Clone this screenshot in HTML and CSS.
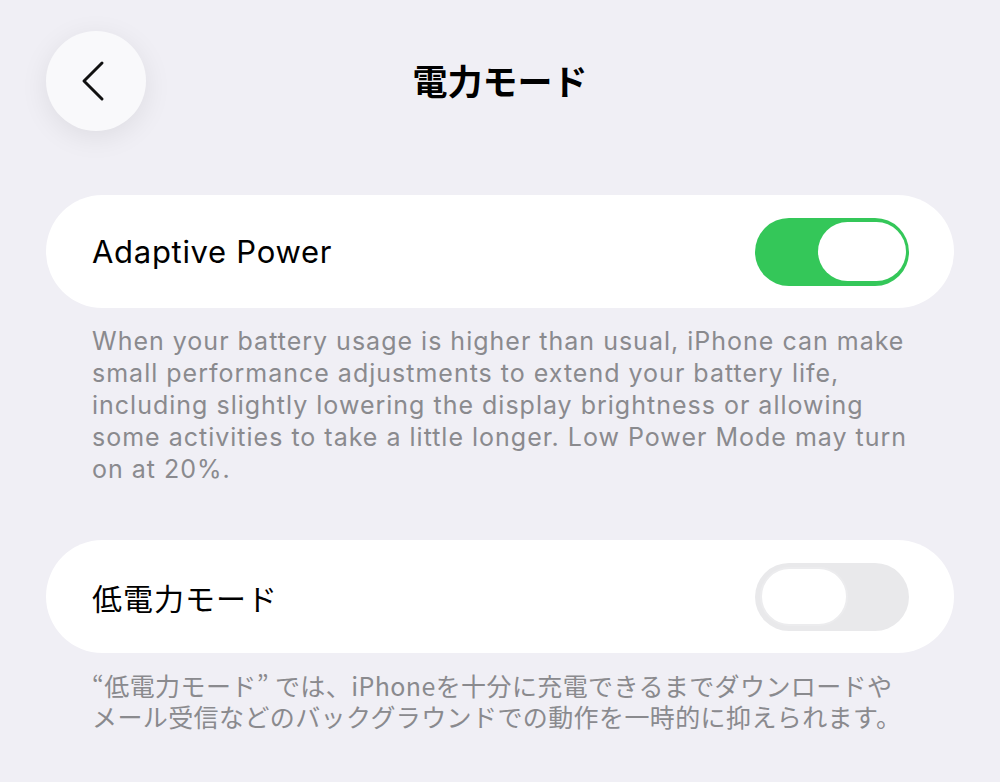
FILE: index.html
```html
<!DOCTYPE html>
<html lang="ja">
<head>
  <meta charset="UTF-8">
  <title>電力モード</title>
  <link rel="stylesheet" href="styles.css">
</head>
<body>
  <div class="screen">
    <header class="nav">
      <button class="back" aria-label="戻る">
        <svg width="26" height="42" viewBox="0 0 26 42">
          <path d="M22 3 L4 21 L22 39" fill="none" stroke="#111" stroke-width="3" stroke-linecap="round" stroke-linejoin="round"/>
        </svg>
      </button>
      <h1 class="title">電力モード</h1>
      <span></span>
    </header>

    <div class="card">
      <span class="label">Adaptive Power</span>
      <div class="switch on"><span class="knob"></span></div>
    </div>
    <p class="note">When your battery usage is higher than usual, iPhone can make<br>
      small performance adjustments to extend your battery life,<br>
      including slightly lowering the display brightness or allowing<br>
      some activities to take a little longer. Low Power Mode may turn<br>
      on at 20%.</p>

    <div class="card second">
      <span class="label jp">低電力モード</span>
      <div class="switch"><span class="knob"></span></div>
    </div>
    <p class="note jp">“低電力モード” では、iPhoneを十分に充電できるまでダウンロードや<br>
      メール受信などのバックグラウンドでの動作を一時的に抑えられます。</p>
  </div>
</body>
</html>
```

FILE: styles.css
```css
body {
  margin: 0;
  background-color: #f0eff5;
  font-family: Inter, "Noto Sans CJK JP", sans-serif;
  color: #000;
}
.screen {
  width: 1000px;
  height: 782px;
  padding: 31px 46px 0;
  box-sizing: border-box;
  overflow: hidden;
}
.nav {
  display: grid;
  grid-template-columns: 100px 1fr 100px;
  align-items: center;
}
.back {
  width: 100px;
  height: 100px;
  border: none;
  border-radius: 50%;
  background: #f9f9fb;
  box-shadow: 0 6px 28px rgba(0,0,0,0.08);
  display: flex;
  align-items: center;
  justify-content: center;
  padding: 0 6px 0 0;
}
.title {
  margin: -3px 0 0;
  text-align: center;
  font-family: "Noto Sans CJK JP", sans-serif;
  font-size: 35px;
  font-weight: 700;
}
.card {
  margin-top: 64px;
  height: 113px;
  background: #fff;
  border-radius: 57px;
  display: flex;
  align-items: center;
  justify-content: space-between;
  padding: 0 45px 0 46px;
}
.card.second {
  margin-top: 55px;
}
.label {
  font-size: 31px;
  letter-spacing: 0.7px;
}
.jp {
  font-family: "Noto Sans CJK JP", sans-serif;
}
.label.jp {
  font-size: 30px;
  letter-spacing: 1px;
}
.switch {
  width: 154px;
  height: 68px;
  border-radius: 34px;
  background: #e9e9eb;
  display: flex;
  align-items: center;
  padding: 0 5px;
  box-sizing: border-box;
}
.switch.on {
  background: #34c759;
  justify-content: flex-end;
  padding: 0 3px;
}
.knob {
  width: 88px;
  height: 59px;
  border-radius: 30px;
  background: #fff;
  box-sizing: border-box;
  border: 2px solid #ececee;
}
.switch.on .knob {
  border: none;
}
.note {
  margin: 17px 0 0 46px;
  font-size: 25px;
  line-height: 32px;
  letter-spacing: 1px;
  color: #8a8a8e;
}
.note.jp {
  font-size: 25px;
  line-height: 31px;
  letter-spacing: 0.4px;
  white-space: nowrap;
}
```
